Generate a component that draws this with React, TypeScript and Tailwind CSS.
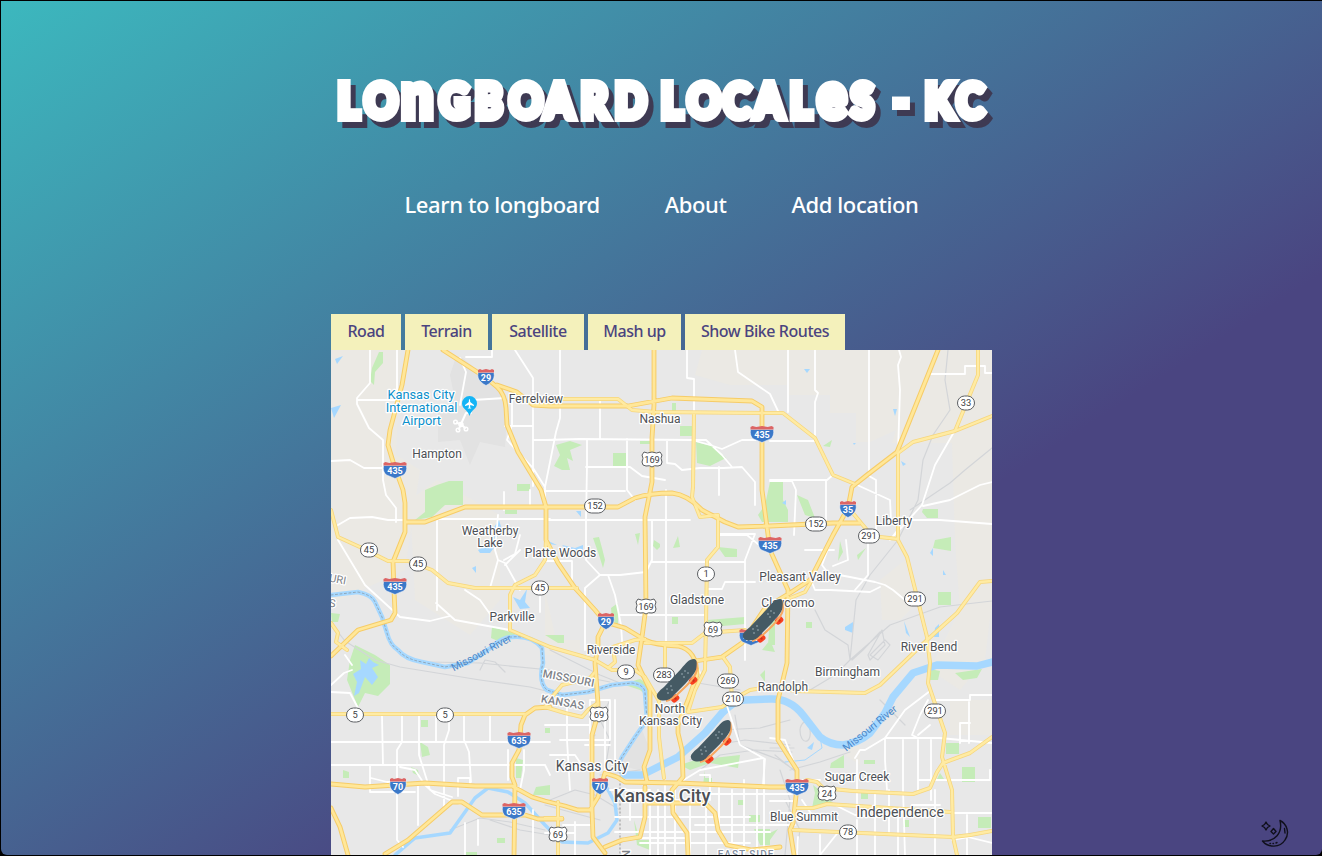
import React from "react";

const motorways = [
  "M408 350L402 385L390 430L388 445L394 465L403 490L405 503V532L393 562L394 590L395 613L391 620L358 630L331 656",
  "M443 350L485 377L497 387Q505 394 506 408L507 425L518 452L541 490L546 507V540L558 563L575 588L595 610L605 622L625 628L645 640Q655 645 678 646Q697 650 697 675L688 700L678 725V733L682 750L683 777L672 790L673 813L687 833L688 855",
  "M497 385L517 392L533 405L550 406H628L672 398L752 401L762 407V490L767 527L770 550L788 590L787 663L778 700V740L797 770V787L793 823L790 830L794 855",
  "M938 350L897 452L867 475L852 487L848 508L833 535L810 580L790 593L765 608L742 643L722 657L695 661",
  "M605 623L598 637V647L595 663L598 703V714L592 735V810L590 810L578 810L565 806L545 801L532 797L512 786L475 786L425 783L365 787L331 784",
  "M550 707L535 708L525 715L521 725L519 750L512 763V777L515 785L514 855",
  "M590 810L598 797L605 773L617 777L625 782L678 783L770 787H797",
  "M385 854L408 840L452 802H462L482 815H525L538 819H562",
  "M331 808L340 827L348 855",
  "M654 350V405L652 438V482L645 517L646 607L642 637L638 665L650 690V750L644 767L647 782",
  "M407 522H425L465 507H618L635 498Q650 493 672 493Q688 495 702 510L725 522L738 527L770 526L833 523H860",
  "M592 810L593 837L605 853M605 847L622 840L640 837L645 817V787M645 803H705L715 813L718 830L727 845L752 850L780 847",
];
const arterials = [
  "M534 399H618L632 410L655 412L770 413H783L815 438L833 475L855 484",
  "M978 350V375L955 431M992 416L955 431L913 442L898 453V540L907 557L927 637L930 663L928 683L945 733L942 757L952 790L953 837L957 855",
  "M331 510L338 537L362 548L388 561H408L432 570L448 583L475 588H577",
  "M546 540L545 560L535 575L515 585L510 595V630L550 647L578 655L595 660L612 670H635L645 677",
  "M694 413L693 487L692 497L700 517L718 515V547L707 560L706 623L705 670L695 690L688 712",
  "M331 714H525",
  "M545 707L565 713L582 717L588 710L598 703M545 707L552 697L562 685L590 678L595 672",
  "M645 643L692 643L705 633L745 630M665 645V673M723 657L730 667L732 699",
  "M645 677L659 701V737L662 763L664 778M688 712L722 707L732 700L750 690L775 686L795 691L865 693L880 685L927 640L957 613L980 582L992 581",
  "M645 639L635 640L613 647L615 662L608 668",
  "M790 598L805 592L812 580M880 537L898 539M852 512L867 530",
  "M797 787L807 780L817 782L823 788L853 791L913 794L930 788L937 772L943 763L970 753L992 737",
  "M797 808H813L827 804L950 812M793 830L953 837L970 835L992 831",
  "M331 623L338 633L336 642L347 650M558 802V855M545 818H562",
];
const minor = [
  "M370 350V383L357 398V404L369 428L383 440V480L386 495L396 508V522M357 400H397M397 350V395M331 461L350 460L364 468H390M338 525L350 518L372 517L388 520H403",
  "M463 404L473 400L505 398M466 357H492V350M460 358L466 372L460 405M515 350L533 378V408M505 426H533M512 400V425L507 440L533 468L545 487M533 410V486M533 440H545L580 439L692 440L710 445L722 449L742 440L762 440",
  "M560 350V418L556 432L545 487V505M600 399V439M587 440V466L586 520M545 491H625M627 439V490L635 500M586 467H630L642 476L665 480M667 440V463L675 464L682 470L700 468H723L742 467L755 482V505M719 467V495M687 350V378L694 379V413M735 350L738 372L770 394L778 411M693 440H706L722 455L732 467",
  "M788 350V412M815 350V390L818 393L815 402V435M869 350V475M899 350L901 357L898 365L900 390L898 452M770 441H816M770 481H792L796 490L794 535M770 480H827L833 475M826 480L826 520M855 484L890 500L891 520M869 476L876 480V530M930 374H965V366H985V373H992M954 432L935 465L922 505L890 540M923 506L950 500L980 485L992 482M912 520H940L992 524",
  "M545 520H600L690 520M586 505V560L600 575L585 588M545 561H572V586M600 575H620L646 572L652 560V520M652 562H745M666 490V665M718 534H755L745 560V660M720 535H747L765 550M620 615H705M608 575L615 595L621 625L623 655M585 588V650M707 589H722L725 582H755M693 655L700 673",
  "M437 520V610M437 519H550M436 603L455 620L510 630M338 540L365 585L400 617L430 621L450 616M465 590L480 600L490 614M498 515L495 550L498 560L490 588M498 560L505 563L520 590M520 550L505 565M530 490V505M504 492V510M540 588V612M504 560L515 554L520 535",
  "M833 535L822 565L828 573L850 577L875 582L885 585L893 590L905 600M868 540V575L855 590M846 540L848 560L833 566M805 550H834M811 580L815 590L830 590L870 592L880 587",
  "M331 742H550M331 765H545M370 765V792H415M382 716L383 765M402 716V742L397 750V840L403 847M419 716V755L430 790L452 797M418 785V825M436 716V742M449 716V730L444 745V808M464 716V740L469 752L471 782M490 716V742M371 778L387 782H400M400 767L415 770L425 785L435 794L460 804M458 796V778H470V785",
  "M508 750V780M524 750V770L520 790M545 765L550 775M533 810V855M465 823V855M478 820V845M331 692L350 693L358 708M331 685L344 673L352 670M345 655L352 665",
  "M560 740H610V700H590V760M545 725H590M567 700V740L570 790M550 755H575L585 770M605 715V790M615 700V770M563 825H592M575 822V855M545 833H575M585 745H610",
  "M700 775H710V800M725 700L740 745L765 759L763 785M682 781L700 770L763 758M764 760V850M610 790H650M630 790V820M615 817H750M615 832H770M665 780V855M675 785V855M658 790V855M650 790V855M690 800V855M706 800V855M719 785V835M732 790V845M744 780V855M757 785V855M640 800H680M640 843H750M625 838H690M695 825H780M700 794H792",
  "M855 758L860 750H865L885 738L905 710L930 691M885 738H940L992 743M885 738V760L887 790M857 760V810M903 740V790L905 855M918 738L912 735L920 715L928 700M918 740V790M931 740V800M875 792V855M857 820V855M935 700H970V695H992M969 702V743M960 743V723H970M919 780H990V770M898 813V855M950 813H992M935 790V855M967 815V855M770 738L785 740L797 770",
  "M793 780H820M770 801H795M770 813H797M820 835V855M835 805L855 815L875 817L910 810M889 790V835M802 800L812 815M820 855L840 830M875 817V835M912 805H940M770 825H795M952 840L968 837L992 843M798 837L797 855M930 725L918 735M890 540L900 527",
];
const rails = [
  "M948 350L945 380L950 410L933 435L923 460L918 500L898 540L870 575L856 600L850 660L835 675L810 690",
  "M992 448L965 470L950 483L910 510M992 601L940 607L890 625L850 660M815 610L825 630L848 645L850 660",
  "M331 623L345 641L375 660L400 667L480 680L530 687L550 692M430 662L480 663L550 670L610 682M480 670L485 660L495 662L505 672M550 650L600 675L620 683",
  "M690 760L715 745L745 740L790 745M700 770L720 755L755 750L792 752M720 730L760 728L790 720M735 715L740 745L780 760L794 770M790 770L820 762L850 752M770 748H794M775 755L796 772",
  "M550 800L575 790L595 795L620 810M545 805L570 812L600 820M450 830L480 818L510 822L545 830M490 820L520 830L550 835M780 770L790 800L785 855M797 850L800 830L785 800M665 670L680 680L740 690",
  "M868 655L882 630L885 645L870 660ZM870 655L885 640L890 645L878 660ZM800 730C800 745 812 745 810 730S800 724 800 730M852 660L863 650L880 632",
  "M880 700L905 725M610 700L600 720L610 740L605 770M590 740L595 735M640 770L600 775",
];
const greens = [
  "M379 352H383V363L375 372L374 385L370 381L372 368Z", "M437 485L449 481H463V505H445L432 517L415 520L425 512V490Z",
  "M517 484H530V491H517Z", "M556 445L570 441L582 445L570 450L573 461L567 458L570 470L562 470L554 466L560 455Z",
  "M613 453H626V466H613Z", "M680 426H693V436H680Z", "M696 442L715 447L726 458L710 466L697 463Z",
  "M672 403H676V411H672Z", "M640 441H650V444H640Z", "M770 482H783V500L788 510V522H762L758 515L765 505Z",
  "M797 495L808 500L815 518L805 515Z", "M823 446L832 440L830 447Z", "M923 509H938V518H927L922 512Z",
  "M935 540L951 537V551L933 548Z", "M938 592H951V605H938Z", "M806 622H812V628H806Z",
  "M840 541L843 552L838 561ZM857 555L866 548L858 560Z", "M593 538L599 537L602 548L605 560L603 568L599 555Z",
  "M654 540L660 544V547L657 550L653 546ZM673 548L678 536L680 547ZM635 534L640 533L638 545Z",
  "M718 547L737 549V557H725ZM611 608L618 603V625L612 620Z", "M672 617H678V624H672ZM707 620L745 617V624L712 627Z",
  "M355 645L375 655L390 665V684L378 696L365 693L358 707L347 680L350 660Z", "M331 613L340 614L338 622H332Z",
  "M492 627L510 632L520 632L500 642L491 638Z", "M421 720H428V727H421ZM420 742L428 747L430 755L422 757ZM411 767L418 770L419 776L413 773Z",
  "M343 770L349 772V778H343ZM516 758L523 760L521 778H516ZM536 787L550 785V795H533Z",
  "M680 765L695 760L740 755L738 768L710 763L690 770Z", "M705 770V778H712V785H703ZM738 800H744V805H738ZM754 829H770V845H760ZM749 815H760V822H749Z",
  "M930 669L940 671L938 680H930ZM955 673L982 669L977 678L963 680Z", "M946 743H959V754H946ZM962 767H975V782H962Z",
  "M813 785L822 792L833 803L812 808L815 793ZM831 763L844 755V768H830ZM864 760H875V764H864Z",
  "M978 817H991V828H978ZM903 820H909V827H903ZM861 793H868V799H861ZM940 773L944 779H937Z",
  "M622 684L640 679L648 684V697L640 690ZM634 820L640 840H650V850L637 845Z", "M770 615H775V645H768ZM762 650L770 640L775 652ZM760 675L765 670V682Z",
  "M545 728H550V733H545ZM770 833L778 829L770 840ZM545 635H564V643H558ZM505 510H517V514H505ZM497 838H505V843H497ZM466 852H477V855H466Z",
];
const pale = [
  "M331 350H401L396 455L420 470L405 570L340 600H331Z", "M410 500L437 480L500 515V600L470 635L415 600Z",
  "M695 375L702 350H992V443H892L896 430L870 442H856V413H830V395H788V385H730Z",
  "M952 443H992V600L985 660L960 690L930 670L960 610L955 540Z", "M880 580L905 560L920 600L900 620H882ZM950 700H992V735H950ZM545 590L556 640H580V655H545ZM845 755L860 740V765Z",
];
const ponds = [
  "M335 359L343 356L337 364ZM331 408L341 405L334 418Z", "M804 369H810L807 373ZM893 409H897L895 416ZM853 443H856L854 445ZM901 461L906 464L903 466Z",
  "M478 550L487 545H496L490 553H480ZM499 520L502 530L495 540L492 530ZM472 568L476 566V573Z",
  "M513 597L520 600L527 589L525 602L530 608L520 609Z", "M562 545L575 548L583 545V552L566 549ZM576 511L581 511V517ZM546 540L557 545L548 544Z",
  "M360 660L366 664L369 658L373 662L379 665L372 668L378 677L372 685L365 677L359 693L354 696L357 682L353 674L361 669Z", "M845 627L853 622V633L845 630ZM904 621L910 637L906 633Z",
  "M807 748L814 742L812 750ZM935 628L939 624V637H934ZM943 570L946 575H943ZM930 553L933 548V556ZM782 503L786 500V505Z",
];
const missouri =
  "M331 595L358 592Q372 595 375 602L382 617L387 633Q390 645 398 650Q405 659 422 662L445 667L468 663L492 647Q503 637 512 637Q532 635 542 648L543 663Q538 682 547 690L562 695L588 692L612 685L632 683Q645 685 645 693L647 720L635 737L622 757Q615 770 625 775";
const missouriEast =
  "M625 775H642L678 757L705 733L722 713Q735 700 745 700L770 699Q790 698 803 715L820 737Q830 745 843 745Q858 743 870 733L885 713L893 697L913 673L937 665L977 666L992 662";
const kansas =
  "M395 855L415 838L450 833L475 798L488 788L508 792L525 803L545 825L562 842L588 843L608 833L617 820L615 803L607 788";

type Place = [string, number, number, number?, number?];
const places: Place[] = [
  ["Ferrelview", 536, 403], ["Nashua", 660, 423], ["Hampton", 437, 458], ["Weatherby", 490, 535], ["Lake", 490, 547],
  ["Platte Woods", 560.5, 557], ["Liberty", 894, 525], ["Parkville", 512, 621], ["Gladstone", 697, 604],
  ["Pleasant Valley", 800, 581], ["Claycomo", 788, 607], ["Riverside", 611, 654], ["River Bend", 929, 651],
  ["Birmingham", 847.5, 676], ["Randolph", 783, 691], ["North", 670, 713], ["Kansas City", 670.5, 725],
  ["Kansas City", 592, 771, 13.8], ["Kansas City", 662, 802, 18.4, 500], ["Sugar Creek", 857, 781],
  ["Blue Summit", 804, 821], ["Independence", 900, 817, 14],
];

type Sign = [string, number, number];
const stateSigns: Sign[] = [
  ["45", 369, 550], ["45", 418, 564], ["45", 540, 588], ["152", 595, 506], ["152", 816, 524], ["33", 966, 403],
  ["291", 869, 536], ["291", 915, 599], ["291", 935, 711], ["1", 706, 574], ["9", 626, 672], ["283", 664, 675],
  ["269", 728, 681], ["210", 733, 699], ["5", 355, 715], ["5", 445, 715], ["78", 848, 832],
];
const usSigns: Sign[] = [
  ["169", 652, 459], ["169", 646, 606], ["69", 713, 629], ["69", 599, 714], ["69", 558, 834], ["24", 827, 793],
];
const interstates: Sign[] = [
  ["29", 486, 377], ["435", 395, 470], ["435", 762, 434], ["35", 848, 509], ["435", 770, 545], ["435", 395, 586],
  ["29", 606, 621], ["435", 751, 637], ["635", 519, 740], ["70", 398, 786], ["635", 514, 811], ["70", 600, 786], ["435", 797, 787],
];

function StateSign({ label, x, y }: { label: string; x: number; y: number }) {
  const w = label.length === 3 ? 21 : 17;
  return (
    <g transform={`translate(${x} ${y})`}>
      <rect x={-w / 2} y={-7} width={w} height={14} rx={7} fill="#fff" stroke="#5c5f63" />
      <text y={3.3} textAnchor="middle" fontSize="9.3" fill="#3d4043">{label}</text>
    </g>
  );
}

function UsSign({ label, x, y }: { label: string; x: number; y: number }) {
  const w = label.length === 3 ? 10 : 9;
  return (
    <g transform={`translate(${x} ${y})`}>
      <path
        d={`M${-w + 2} -7Q${-w / 2} -5 0 -7Q${w / 2} -5 ${w - 2} -7L${w} -4Q${w - 2} -1 ${w} 3Q${w} 7 ${w - 4} 7Q2 6 0 8Q-2 6 ${-w + 4} 7Q${-w} 7 ${-w} 3Q${-w + 2} -1 ${-w} -4Z`}
        fill="#fff" stroke="#5c5f63"
      />
      <text y={3.6} textAnchor="middle" fontSize="9.3" fill="#3d4043">{label}</text>
    </g>
  );
}

function InterstateSign({ label, x, y }: { label: string; x: number; y: number }) {
  const w = label.length === 3 ? 11.5 : 8;
  return (
    <g transform={`translate(${x} ${y})`}>
      <path d={`M${-w} -4.5H${w}Q${w + 1} 2 ${w - 3} 5Q3 7 0 8.5Q-3 7 ${-w + 3} 5Q${-w - 1} 2 ${-w} -4.5Z`} fill="#3b78c8" stroke="#fff" strokeWidth=".5" />
      <path d={`M${-w} -4.5V-7L${-w + 2} -8L${-w / 2} -7L0 -8L${w / 2} -7L${w - 2} -8L${w} -7V-4.5Z`} fill="#dc6464" />
      <text y={4} textAnchor="middle" fontSize="9" fill="#fff" fontWeight="700">{label}</text>
    </g>
  );
}

function Skateboard({ x, y }: { x: number; y: number }) {
  return (
    <g transform={`translate(${x} ${y})`}>
      {[[-1.5, 18.5], [16.5, 0.5]].map(([wx, wy]) => (
        <g key={wx} transform={`translate(${wx} ${wy}) rotate(-40)`}>
          <rect x="-4.500" y="-3.500" width="8.500" height="6.500" rx="2.500" fill="#f8401f" />
          <circle r="1.2" fill="#c8301c" />
        </g>
      ))}
      <path d="M19 -19Q21 -12 19 -7Q15 1 5 10Q-5 20 -11 21" fill="none" stroke="#f8a860" strokeWidth="2" />
      <path d="M-20 17C-21 14 -18 11 -13 7L4 -11C9 -17 12 -21 17 -21C20 -21 20 -17 19.500 -13C19 -7 14 -3 9 3L-3 15C-6 19 -10 21 -15 20.500C-18 20 -19.500 19 -20 17Z" fill="#455a64" />
      {[[-10, 9], [-6, 6], [-9, 13], [-5, 10], [5, -6], [8, -9], [7, -3], [11, -7]].map(([cx, cy]) => (
        <circle key={`${cx},${cy}`} cx={cx} cy={cy} r=".8" fill="#a5b4bb" />
      ))}
    </g>
  );
}

function CityMap() {
  const halo = { stroke: "#fff", strokeWidth: 2.5, strokeLinejoin: "round" as const, paintOrder: "stroke" as const };
  return (
    <svg viewBox="331 350 661 505" className="block h-[505px] w-[661px] shrink-0" fontFamily="Roboto, sans-serif">
      <rect x="331" y="350" width="661" height="505" fill="#e8e8e8" />
      <path d={pale.join("")} fill="#ebe9e4" />
      <path d="M455 360L463 358L490 382L508 400L505 447L480 442L470 465L460 440L438 442V410L455 400L450 375ZM640 725L620 765L645 772L650 750Z" fill="#e2e2e2" />
      <path d={greens.join("")} fill="#c5ecb8" />
      <path d={ponds.join("")} fill="#a6d8ff" />
      <g fill="none" strokeLinejoin="round" strokeLinecap="round">
        <path d={rails.join("")} stroke="#d3d5d8" strokeWidth="1.2" />
        <path d={missouri} stroke="#a6d8ff" strokeWidth="4.5" />
        <path d={missouriEast} stroke="#a6d8ff" strokeWidth="7.5" />
        <path d={kansas} stroke="#a6d8ff" strokeWidth="3.5" />
        <path d="M820 737L822 748L805 760L785 762" stroke="#a6d8ff" />
        <path d={missouri} stroke="#8a9aa8" strokeDasharray="2 2.5" strokeWidth=".8" />
        <path d="M620 760V855" stroke="#b0b0b0" strokeDasharray="1 3" strokeWidth="1.5" />
        <path d={minor.join("")} stroke="#fff" strokeWidth="1.8" />
        <path d={arterials.join("")} stroke="#f6d67d" strokeWidth="4" />
        <path d={motorways.join("")} stroke="#f6cc68" strokeWidth="4.8" />
        <path d={arterials.join("")} stroke="#ffeba3" strokeWidth="2.4" />
        <path d={motorways.join("")} stroke="#ffe799" strokeWidth="2.8" />
        <path d="M461 424L466 413H471M461 424L457 423M461 424L459 429M461 424L465 428" stroke="#fff" strokeWidth="2" />
        <g stroke="#fff" strokeWidth="1.5">
          <circle cx="455.500" cy="422" r="1.8" />
          <circle cx="458" cy="430" r="1.8" />
          <circle cx="466" cy="429" r="1.8" />
          <circle cx="461" cy="424.500" r="2" />
        </g>
      </g>
      {stateSigns.map(([label, x, y]) => <StateSign key={`${x}-${y}`} label={label} x={x} y={y} />)}
      {usSigns.map(([label, x, y]) => <UsSign key={`${x}-${y}`} label={label} x={x} y={y} />)}
      {interstates.map(([label, x, y]) => <InterstateSign key={`${x}-${y}`} label={label} x={x} y={y} />)}
      <g fill="#4d5055" textAnchor="middle" {...halo}>
        {places.map(([name, x, y, size = 12, weight = 400]) => (
          <text key={`${name}-${x}`} x={x} y={y} fontSize={size} fontWeight={weight}>{name}</text>
        ))}
      </g>
      <g fill="#0b8fcb" fontSize="12.8" textAnchor="middle" {...halo}>
        <text x="421" y="398.500">Kansas City</text>
        <text x="421.500" y="411.500">International</text>
        <text x="421.500" y="424.500">Airport</text>
      </g>
      <path d="M469.5 416C468 410 462 409 462 403.500A7.500 7.500 0 0 1 477 403.500C477 409 471 410 469.500 416Z" fill="#14b4f5" />
      <path d="M469.5 399Q468.800 399 468.800 402L465 405V406L468.800 405V407.500L467.500 408.500H471.500L470.200 407.500V405L474 406V405L470.200 402Q470.200 399 469.500 399Z" fill="#fff" />
      <g fill="#7e8288" fontSize="11" fontWeight="500" textAnchor="middle" {...halo}>
        <text transform="translate(568 682) rotate(11)" letterSpacing=".2">MISSOURI</text>
        <text transform="translate(562 706) rotate(10)" letterSpacing=".2">KANSAS</text>
        <text transform="translate(337 583) rotate(10)" fontWeight="400">URI</text>
        <text transform="translate(332 607) rotate(5)" fontWeight="400">S</text>
        <text x="746" y="858" fontSize="10" letterSpacing="1" fill="#8490a2">EAST SIDE</text>
        <text transform="translate(622 854) rotate(90)">N</text>
      </g>
      <g fill="#4a87c9" fontSize="10.5" textAnchor="middle">
        <text transform="translate(483 656) rotate(-28)">Missouri River</text>
        <text transform="translate(872 731) rotate(-39)">Missouri River</text>
      </g>
      <Skateboard x={763} y={620} />
      <Skateboard x={677} y={680} />
      <Skateboard x={711} y={741} />
    </svg>
  );
}

function Title() {
  return (
    <h1 className="mt-[44px]">
      <svg viewBox="0 0 672 96" className="block h-24 w-[672px] overflow-visible drop-shadow-[5px_6px_0_#3e3a53]" fontFamily="Lato, sans-serif">
        <g fill="#fff" stroke="#fff" strokeWidth="8" strokeLinejoin="miter" strokeMiterlimit="3" fontWeight="900" fontSize="47" transform="scale(.88 1)">
          <text y="73.500">
            <tspan x="13.500 43.500">LO</tspan>
            <tspan x="85.500" fontSize="64">n</tspan>
            <tspan x="128.700 169.300 208.300 248.400 289.700 328.300">GBOARD</tspan>
          </text>
          <text y="73.500">
            <tspan x="380.600 410.500 451.400 487 527.200">LOCAL</tspan>
            <tspan x="558.300" fontSize="62">e</tspan>
            <tspan x="596.300">S</tspan>
          </text>
          <text y="73.500" x="644.600">-</text>
          <text y="73.500" x="680.600 716.500">KC</text>
        </g>
      </svg>
    </h1>
  );
}

const navClass = "whitespace-nowrap";
const tabClass = "flex h-9 items-center justify-center whitespace-nowrap bg-[#f4f1bb] pb-0.5";

export default function App() {
  return (
    <div className="h-screen overflow-hidden bg-black pb-px pl-px pt-px">
      <div className="relative flex h-full flex-col items-center overflow-hidden rounded-b-md bg-[linear-gradient(to_bottom_right,#3cb8be,#4a4581_66%)]">
        <Title />
        <nav className="mt-[47px] flex h-8 w-[514px] items-center justify-between font-['Noto_Sans',sans-serif] text-[22px] font-medium tracking-[-0.4px] text-white">
          <a className={navClass}>Learn to longboard</a>
          <a className={navClass}>About</a>
          <a className={navClass}>Add location</a>
        </nav>
        <main className="mt-[94px] w-[661px]">
          <div className="flex gap-1 font-['Noto_Sans',sans-serif] text-[16px] font-medium tracking-[-0.45px] text-[#4b447f]">
            <button className={`${tabClass} w-[70px]`}>Road</button>
            <button className={`${tabClass} w-[83px]`}>Terrain</button>
            <button className={`${tabClass} w-[92px]`}>Satellite</button>
            <button className={`${tabClass} w-[93px]`}>Mash up</button>
            <button className={`${tabClass} w-[160px]`}>Show Bike Routes</button>
          </div>
          <CityMap />
        </main>
        <button className="absolute bottom-[7px] right-[32px]" aria-label="Night mode">
          <svg width="30" height="30" viewBox="1260 818 30 30" fill="none" stroke="#10101c" strokeWidth="1.4" strokeLinejoin="round" strokeLinecap="round">
            <path d="M1280 820.500C1287 824 1290 833 1285 840C1280 848 1268 848 1262.500 841C1275 842 1283 833 1280 820.500Z" />
            <path d="M1266 822L1267.500 824.500L1270 826L1267.500 827.500L1266 830L1264.500 827.500L1262 826L1264.500 824.500ZM1273.500 828.500L1276 831.500L1273.500 834L1271 831.500Z" />
            <path d="M1284.500 828.500L1285 833M1270 843.500H1270.500M1273 843.500H1273.500M1276 843L1277 842.500" />
          </svg>
        </button>
      </div>
    </div>
  );
}
